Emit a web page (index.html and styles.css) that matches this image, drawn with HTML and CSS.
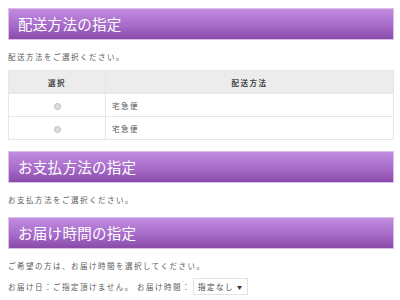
FILE: index.html
```html
<!DOCTYPE html>
<html lang="ja">
<head>
<meta charset="UTF-8" />
<title>ご注文手続き</title>
<link rel="stylesheet" href="styles.css">
</head>
<body>
  <div class="wrap">
    <h2 class="title">配送方法の指定</h2>
    <p class="note">配送方法をご選択ください。</p>
    <table class="deliv">
      <tr>
        <th class="sel">選択</th>
        <th>配送方法</th>
      </tr>
      <tr>
        <td class="sel"><span class="radio"></span></td>
        <td>宅急便</td>
      </tr>
      <tr>
        <td class="sel"><span class="radio"></span></td>
        <td>宅急便</td>
      </tr>
    </table>

    <h2 class="title">お支払方法の指定</h2>
    <p class="note">お支払方法をご選択ください。</p>

    <h2 class="title">お届け時間の指定</h2>
    <p class="note">ご希望の方は、お届け時間を選択してください。</p>
    <p class="note time">お届け日：ご指定頂けません。 お届け時間：
      <span class="select">指定なし <span class="arrow">▼</span></span>
    </p>
  </div>
</body>
</html>
```

FILE: styles.css
```css
body {
  margin: 0;
  padding: 8px 6px 0 8px;
  background-color: #fff;
  color: #555;
  font-family: "Noto Sans CJK JP", "Noto Sans", sans-serif;
}

.wrap {
  display: flex;
  flex-direction: column;
}

/* 見出し */
.title {
  margin: 0;
  height: 30px;
  line-height: 29px;
  padding: 0 9px;
  border: 1px solid #dcc0ec;
  background: linear-gradient(to bottom, #c28ce0 0%, #a76bc9 55%, #8a4ba8 100%);
  color: #fff;
  font-size: 14.5px;
  font-weight: normal;
  letter-spacing: 0.3px;
}

.note {
  margin: 10px 0 0;
  font-size: 7.5px;
  line-height: 12px;
  letter-spacing: 1.5px;
  color: #5a5a5a;
}

/* 配送方法テーブル */
.deliv {
  margin: 7px 0 11px;
  width: 100%;
  border-collapse: collapse;
  font-size: 7.5px;
  letter-spacing: 1.5px;
}
.deliv th,
.deliv td {
  border: 1px solid #e6e6e6;
  height: 22px;
  padding: 0 6px;
}
.deliv th {
  background-color: #ececec;
  color: #444;
  font-weight: bold;
  text-align: center;
}
.deliv td {
  text-align: left;
  color: #555;
}
.deliv .sel {
  width: 84px;
  text-align: center;
}
.radio {
  display: inline-block;
  width: 5px;
  height: 5px;
  border: 1px solid #bbb;
  border-radius: 50%;
  background-color: #ddd;
  vertical-align: middle;
}

.wrap .note + .title {
  margin-top: 11px;
}
.title + .note {
  margin-top: 11px;
}

.time {
  margin-top: 6px;
  display: flex;
  align-items: center;
}
.select {
  display: inline-flex;
  align-items: center;
  margin-left: 2px;
  height: 15px;
  padding: 0 4px;
  border: 1px solid #e2e2e2;
  color: #444;
}
.arrow {
  margin-left: 3px;
  font-size: 5px;
  color: #333;
}
```
